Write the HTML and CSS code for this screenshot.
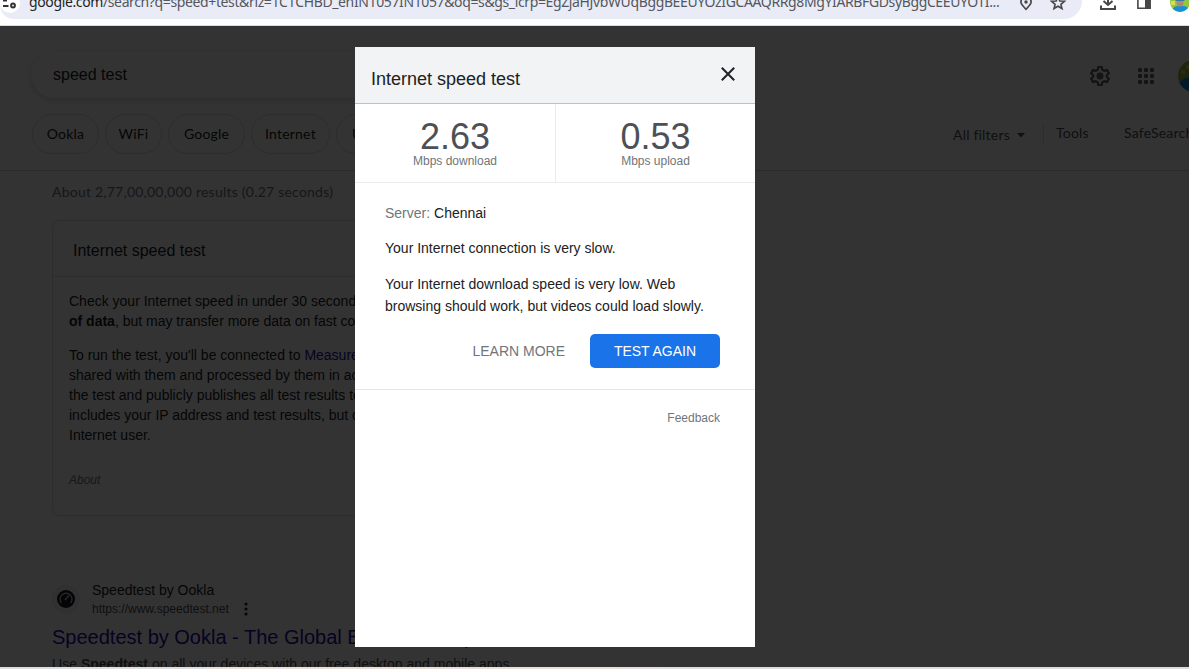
FILE: index.html
```html
<!DOCTYPE html>
<html lang="en">
<head>
<meta charset="utf-8">
<title>speed test - Google Search</title>
<link rel="stylesheet" href="styles.css">
</head>
<body>
<div class="window">
  <header class="toolbar">
    <div class="omnibox">
      <span class="site-info">
        <svg width="20" height="26" viewBox="0 0 20 26"><circle cx="10" cy="3" r="10" fill="#fff"/><g fill="none" stroke="#333" stroke-width="2"><path d="M3 .500h4M3 6h5.500"/><circle cx="13" cy="5.500" r="1.900"/></g></svg>
      </span>
      <span class="url"><span class="host">google.com</span><span class="path">/search?q=speed+test&amp;rlz=1C1CHBD_enIN1057IN1057&amp;oq=s&amp;gs_lcrp=EgZjaHJvbWUqBggBEEUYOzIGCAAQRRg8MgYIARBFGDsyBggCEEUYOTI...</span></span>
      <svg class="pin" width="14" height="16" viewBox="0 0 14 16"><path d="M7 13.300C4 10 1.900 8.200 1.900 6a5.100 5.100 0 0 1 10.200 0c0 2.200-2.100 4-5.100 7.300z" fill="none" stroke="#474747" stroke-width="1.700"/><circle cx="7" cy="6" r="1.700" fill="#474747"/></svg>
      <svg class="star" width="16" height="16" viewBox="0 0 16 16"><path d="M8 1.500l1.800 4.400 4.700.4-3.600 3.100 1.100 4.100L8 11.200 4 13.500l1.100-4.100L1.500 6.300l4.700-.4z" fill="none" stroke="#474747" stroke-width="1.600"/></svg>
    </div>
    <svg class="download" width="18" height="16" viewBox="0 0 18 16"><path d="M9 0v9M4.500 5L9 9l4.500-4M2 9.500V13h14V9.500" fill="none" stroke="#474747" stroke-width="2"/></svg>
    <svg class="panel" width="16" height="16" viewBox="0 0 16 16"><path d="M1.900 0h12.200v12.200H1.900z" fill="none" stroke="#474747" stroke-width="1.600"/><path d="M9 0h5.500v13H9z" fill="#474747"/></svg>
    <svg class="profile" width="20" height="22" viewBox="0 0 20 22"><clipPath id="p"><circle cx="10" cy="10" r="10"/></clipPath><g clip-path="url(#p)"><path fill="#91c83d" d="M0 0h20v20H0z"/><path fill="#e4d65b" d="M1 9h4v4H1z"/><path fill="#1691d6" d="M2 20c0-5 3-6 8-6s9 0 9 6z"/><circle cx="10" cy="11" r="3.500" fill="#b28a6b"/><path fill="#327aa9" d="M5 9l5-4 5 4z"/></g></svg>
  </header>

  <main class="viewport">
    <div class="page">
      <div class="top">
        <div class="searchbox">speed test</div>
        <div class="account">
          <svg class="gear" width="24" height="24" viewBox="0 0 24 24"><path fill="none" stroke="#5f6368" stroke-width="2.200" stroke-linejoin="round" d="M10.200 3h3.600l.5 2.700 2 1.200 2.600-1 2 3.500-2.100 1.700v1.800l2.100 1.700-2 3.500-2.600-1-2 1.200-.5 2.700h-3.600l-.5-2.700-2-1.200-2.600 1-2-3.500 2.100-1.700v-1.800L3.100 9.400l2-3.500 2.600 1 2-1.200z"/><circle cx="12" cy="12" r="3.500" fill="#5f6368"/></svg>
          <svg class="apps" width="24" height="24" viewBox="0 0 24 24" fill="#5f6368"><g id="row"><rect x="4" y="4" width="4" height="4" rx="1.300"/><rect x="10" y="4" width="4" height="4" rx="1.300"/><rect x="16" y="4" width="4" height="4" rx="1.300"/></g><use href="#row" y="6"/><use href="#row" y="12"/></svg>
          <svg class="avatar" width="32" height="32" viewBox="0 0 32 32"><clipPath id="a"><circle cx="16" cy="16" r="16"/></clipPath><g clip-path="url(#a)"><path fill="#91b83d" d="M0 0h32v32H0z"/><path fill="#e4d65b" d="M3 10h4v4H3zM8 5h4v4H8z"/><path fill="#1681c6" d="M2 32V22l5-4h25v14z"/></g></svg>
        </div>
      </div>
      <nav class="filters">
        <div class="chips">
          <span class="chip c1">Ookla</span><span class="chip c2">WiFi</span><span class="chip c3">Google</span><span class="chip c4">Internet</span><span class="chip c5">Upload</span>
        </div>
        <div class="tools">
          <span class="all">All filters</span>
          <svg class="caret" width="8" height="5" viewBox="0 0 8 5"><path d="M0 0h8L4 4.500z" fill="#4d5156"/></svg>
          <span class="rule"></span>
          <span class="tool">Tools</span>
          <span class="safe">SafeSearch</span>
        </div>
      </nav>
      <section class="results">
        <p class="stats">About 2,77,00,00,000 results (0.27 seconds)</p>
        <article class="card">
          <h2 class="card-title">Internet speed test</h2>
          <div class="card-body">
            <p>Check your Internet speed in under 30 seconds.<br><b>of data</b>, but may transfer more data on fast connections.</p>
            <p>To run the test, you'll be connected to <a>Measurement Lab</a><br>shared with them and processed by them in accordance<br>the test and publicly publishes all test results to promote<br>includes your IP address and test results, but doesn't<br>Internet user.</p>
            <p class="about">About</p>
          </div>
        </article>
        <article class="hit">
          <div class="source">
            <svg class="favicon" width="28" height="28" viewBox="0 0 28 28"><circle cx="14" cy="14" r="13.500" fill="#f1f3f4" stroke="#e4e7ea"/><circle cx="14" cy="14" r="9" fill="#141526"/><path d="M9.300 18a6 6 0 1 1 9.400 0" fill="none" stroke="#c8c8cc" stroke-width="1.300"/><path d="M13 15l4-4.500" stroke="#c8c8cc" stroke-width="1.500"/></svg>
            <div class="site">
              <span class="site-name">Speedtest by Ookla</span>
              <span class="site-url">https://www.speedtest.net
                <svg width="4" height="14" viewBox="0 0 4 14"><g fill="#202124"><circle cx="2" cy="2" r="1.600"/><circle cx="2" cy="7" r="1.600"/><circle cx="2" cy="12" r="1.600"/></g></svg>
              </span>
            </div>
          </div>
          <h3 class="hit-title">Speedtest by Ookla - The Global Broadband Speed Test</h3>
          <p class="snippet">Use <b>Speedtest</b> on all your devices with our free desktop and mobile apps.</p>
        </article>
      </section>
    </div>
    <div class="scrim">
      <section class="dialog">
        <header class="dialog-head">
          <h1 class="dialog-title">Internet speed test</h1>
          <svg class="close" width="14" height="14" viewBox="0 0 14 14"><path d="M.8.8l12.400 12.400M13.200.8L.8 13.200" stroke="#202124" stroke-width="2"/></svg>
        </header>
        <div class="metrics">
          <div class="metric"><span class="value">2.63</span><span class="unit">Mbps download</span></div>
          <div class="metric"><span class="value">0.53</span><span class="unit">Mbps upload</span></div>
        </div>
        <div class="report">
          <p class="server"><span class="muted">Server:</span> Chennai</p>
          <p class="verdict">Your Internet connection is very slow.</p>
          <p class="detail">Your Internet download speed is very low. Web browsing should work, but videos could load slowly.</p>
          <div class="actions">
            <span class="learn">LEARN MORE</span>
            <span class="again">TEST AGAIN</span>
          </div>
        </div>
        <footer class="feedback">Feedback</footer>
      </section>
    </div>
  </main>
  <div class="edge"></div>
</div>
</body>
</html>
```
FILE: styles.css
```css
* { box-sizing: border-box; }
body { margin: 0; font-family: "Liberation Sans", Arial, sans-serif; font-size: 14px; color: #202124; background: #fff; }
h1, h2, h3, p { margin: 0; font-weight: 400; }
svg { display: block; flex: none; }

.window { width: 1189px; height: 669px; display: flex; flex-direction: column; overflow: hidden; }

/* Browser toolbar */
.toolbar { height: 26px; flex: none; display: flex; align-items: flex-start; background: #fff; border-bottom: 1px solid #dcdce0; overflow: hidden; }
.omnibox { width: 1082px; height: 19px; flex: none; display: flex; background: #e9ecf7; border-radius: 0 0 18px 14px; }
.site-info { width: 29px; flex: none; }
.url { width: 990px; height: 20px; flex: none; margin-top: -8px; font-family: "Noto Sans", sans-serif; font-size: 14px; line-height: 20px; letter-spacing: -.375px; white-space: nowrap; color: #54565c; }
.host { color: #1f1f1f; }
.pin { margin: -4px 0 0 0; }
.star { margin: -5px 0 0 17px; }
.download { margin: -4px 0 0 17px; }
.panel { margin: -4px 0 0 19px; }
.profile { margin: -8px 0 0 18px; }

/* Search page */
.viewport { height: 641px; flex: none; position: relative; overflow: hidden; }
.page { height: 641px; overflow: hidden; background: #fff; }
.top { height: 88px; display: flex; justify-content: space-between; padding: 25px 0 0 31px; }
.searchbox { width: 692px; height: 47px; padding-left: 22px; border-radius: 24px; font-size: 16px; line-height: 47px; box-shadow: 0 2px 5px 1px rgba(64, 60, 67, .16); }
.account { width: 101px; flex: none; display: flex; padding-top: 13px; }
.apps { margin-left: 22px; }
.avatar { margin: -4px 0 0 20px; }
.filters { height: 57px; display: flex; border-bottom: 1px solid #d2d4d7; font-family: Lato, sans-serif; letter-spacing: .2px; }
.chips { width: 953px; flex: none; display: flex; gap: 6px; padding-left: 32px; }
.chip { height: 40px; flex: none; border: 1px solid #dadce0; border-radius: 20px; line-height: 38px; text-align: center; }
.c1 { width: 67px; }
.c2 { width: 57px; }
.c3 { width: 77px; }
.c4 { width: 79px; }
.c5 { width: 77px; }
.tools { display: flex; align-items: center; height: 40px; white-space: nowrap; color: #4d5156; }
.all { width: 64px; }
.caret { margin-top: 2px; }
.rule { width: 1px; height: 22px; margin: 0 12px 0 18px; background: #dadce0; }
.tool { width: 68px; }
.tool, .safe { margin-top: -3px; }
.stats { font-family: Lato, sans-serif; line-height: 20px; letter-spacing: .23px; color: #70757a; white-space: nowrap; }
.results { padding: 11px 0 0 52px; }
.card { width: 652px; height: 296px; margin-top: 18px; border: 1px solid #dadce0; border-radius: 8px; }
.card-title { height: 56px; padding-left: 20px; border-bottom: 1px solid #dadce0; font-size: 16px; line-height: 59px; }
.card-body { padding: 14px 16px; line-height: 20px; white-space: nowrap; }
.card-body p + p { margin-top: 14px; }
.card-body a { color: #1a0dab; }
.card-body .about { margin-top: 25px; font-size: 12px; font-style: italic; color: #70757a; }
.hit { padding-top: 65px; }
.source { display: flex; gap: 12px; height: 41px; }
.favicon { margin-top: 4px; }
.site { display: flex; flex-direction: column; }
.site-name { line-height: 18px; }
.site-url { display: flex; align-items: center; gap: 15px; font-size: 12px; line-height: 20px; color: #4d5156; }
.hit-title { font-size: 20px; line-height: 30px; color: #1a0dab; white-space: nowrap; }
.snippet { line-height: 24px; color: #4d5156; letter-spacing: .02px; white-space: nowrap; }

/* Speed test dialog */
.scrim { position: absolute; inset: 0; display: flex; justify-content: center; align-items: flex-start; padding: 21px 79px 0 0; background: rgba(0, 0, 0, .8); }
.dialog { width: 400px; height: 600px; flex: none; background: #fff; }
.dialog-head { height: 57px; display: flex; justify-content: space-between; padding: 0 20px 0 16px; background: #f1f3f4; border-bottom: 1px solid #bdc1c6; }
.dialog-title { padding-top: 1px; font-size: 18px; line-height: 63px; height: 56px; }
.close { margin-top: 20px; }
.metrics { height: 79px; display: flex; border-bottom: 1px solid #ebebeb; }
.metric { width: 200px; display: flex; flex-direction: column; align-items: center; padding-top: 13px; }
.metric + .metric { border-left: 1px solid #ebebeb; }
.value { font-size: 36px; line-height: 40px; color: #4d5156; }
.unit { font-size: 12px; line-height: 12px; margin-top: -2px; color: #70757a; }
.report { height: 207px; padding: 19px 35px 0 30px; line-height: 22px; border-bottom: 1px solid #e4e6e8; }
.muted { color: #70757a; }
.verdict { margin-top: 13px; }
.detail { margin-top: 14px; }
.actions { display: flex; justify-content: flex-end; gap: 25px; margin-top: 17px; line-height: 34px; }
.learn { color: #70757a; }
.again { width: 130px; height: 34px; border-radius: 5px; background: #1a73e8; color: #fff; text-align: center; }
.feedback { padding: 19px 35px 0 0; font-size: 12px; line-height: 18px; color: #70757a; text-align: right; }

.edge { height: 2px; flex: none; background: linear-gradient(90deg, #dedede 0 205px, #eadedb 205px 600px, #ddd 700px); }
```
